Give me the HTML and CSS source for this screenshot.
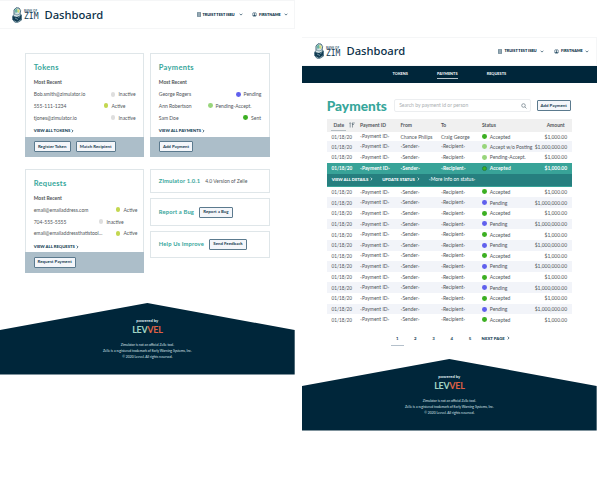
FILE: index.html
```html
<!DOCTYPE html>
<html lang="en">
<head>
<meta charset="utf-8">
<title>Dashboard</title>
<link rel="stylesheet" href="styles.css">
</head>
<body>
<svg width="0" height="0" class="defs">
  <symbol id="mark" viewBox="0 0 10 16">
    <path d="M2 3 4 .8 7 1 8.6 3.5 8 7 9.6 8v5L6 15.2H3L.8 13 .5 9.500 2 7.500z" fill="#d5e2e4" stroke="#365c70" stroke-width=".9"/>
    <path d="M1 9 5 10l4-2v4.500L5 15 1 13z" fill="#123c53"/>
    <path d="M2.500 3 5 1.500 6 5 3.500 6z" fill="#69b5a5"/><path d="M5.500 2 7.500 3 7 6 5.500 5z" fill="#d7dc72"/>
    <path d="M2 6.500 5 8l3-1M3 11l3 1.500M6 10.500 8 9.500" stroke="#7797a4" stroke-width=".9" fill="none"/>
  </symbol>
  <symbol id="building" viewBox="0 0 4 5"><path d="M.5.400h3v4.200h-3zM1.200 1.500h1.600M1.200 2.500h1.600M1.200 3.500h1.600" fill="none" stroke="#244b62" stroke-width=".6"/></symbol>
  <symbol id="user" viewBox="0 0 5 5"><circle cx="2.500" cy="2.500" r="2.100" fill="none" stroke="#244b62" stroke-width=".5"/><circle cx="2.500" cy="2" r=".8" fill="#244b62"/><path d="M1.200 4a1.300 1.200 0 0 1 2.600 0z" fill="#244b62"/></symbol>
  <symbol id="down" viewBox="0 0 4 3"><path d="M.6.700 2 2.100 3.400.7" fill="none" stroke="#244b62" stroke-width=".7"/></symbol>
  <symbol id="next" viewBox="0 0 3 4"><path d="M.7.600 2.100 2 .7 3.400" fill="none" stroke="currentColor" stroke-width=".7"/></symbol>
</svg>

<section class="screen home">
  <header class="top">
    <svg class="mark"><use href="#mark"/></svg>
    <div class="brand"><span>BANK OF</span><b>ZIM</b></div>
    <div class="heading">Dashboard</div>
    <div class="account bank"><svg class="building"><use href="#building"/></svg><span>TRUIST TEST ISBU</span><svg class="down"><use href="#down"/></svg></div>
    <div class="account person"><svg class="user"><use href="#user"/></svg><span>FIRSTNAME</span><svg class="down"><use href="#down"/></svg></div>
  </header>
  <main class="cards">
    <div class="column">
      <article class="panel">
        <div class="panel-body">
          <h2>Tokens</h2>
          <h3>Most Recent</h3>
          <p class="item"><span>Bob.smith@zimulator.io</span><em class="far"><i class="dot idle"></i>Inactive</em></p>
          <p class="item"><span>555-111-1234</span><em class="mid"><i class="dot active"></i>Active</em></p>
          <p class="item"><span>tjones@zimulator.io</span><em class="far"><i class="dot idle"></i>Inactive</em></p>
          <a class="all">VIEW ALL TOKENS <svg class="next"><use href="#next"/></svg></a>
        </div>
        <div class="actions"><button class="w37">Register Token</button><button class="w40">Match Recipient</button></div>
      </article>
      <article class="panel">
        <div class="panel-body">
          <h2>Requests</h2>
          <h3>Most Recent</h3>
          <p class="item"><span>email@emailaddress.com</span><em class="end"><i class="dot active"></i>Active</em></p>
          <p class="item"><span>704-555-5555</span><em class="near"><i class="dot idle"></i>Inactive</em></p>
          <p class="item"><span>email@emailaddressthatistool...</span><em class="end"><i class="dot active"></i>Active</em></p>
          <a class="all">VIEW ALL REQUESTS <svg class="next"><use href="#next"/></svg></a>
        </div>
        <div class="actions"><button class="w42">Request Payment</button></div>
      </article>
    </div>
    <div class="column">
      <article class="panel">
        <div class="panel-body">
          <h2>Payments</h2>
          <h3>Most Recent</h3>
          <p class="item"><span>George Rogers</span><em class="far"><i class="dot pending"></i>Pending</em></p>
          <p class="item"><span>Ann Robertson</span><em class="accept"><i class="dot light"></i>Pending-Accept.</em></p>
          <p class="item"><span>Sam Doe</span><em class="sent"><i class="dot ok"></i>Sent</em></p>
          <a class="all">VIEW ALL PAYMENTS <svg class="next"><use href="#next"/></svg></a>
        </div>
        <div class="actions"><button class="w35">Add Payment</button></div>
      </article>
      <div class="notes">
        <div class="note short"><h4>Zimulator 1.0.1</h4><span>4.0 Version of Zelle</span></div>
        <div class="note"><h4>Report a Bug</h4><button class="w34">Report a Bug</button></div>
        <div class="note"><h4>Help Us Improve</h4><button class="w38">Send Feedback</button></div>
      </div>
    </div>
  </main>
  <footer>
    <div class="powered">powered by</div>
    <div class="level"><span class="mint">LEV</span><span class="coral">VEL</span></div>
    <div class="legal"><p>Zimulator is not an official Zelle tool.</p><p>Zelle is a registered trademark of Early Warning Systems, Inc.</p><p>© 2020 Levvel. All rights reserved.</p></div>
  </footer>
</section>

<section class="screen payments">
  <header class="top">
    <svg class="mark"><use href="#mark"/></svg>
    <div class="brand"><span>BANK OF</span><b>ZIM</b></div>
    <div class="heading">Dashboard</div>
    <div class="account bank"><svg class="building"><use href="#building"/></svg><span>TRUIST TEST ISBU</span><svg class="down"><use href="#down"/></svg></div>
    <div class="account person"><svg class="user"><use href="#user"/></svg><span>FIRSTNAME</span><svg class="down"><use href="#down"/></svg></div>
  </header>
  <nav><a>TOKENS</a><a class="current">PAYMENTS</a><a>REQUESTS</a></nav>
  <main class="listing">
    <div class="tools">
      <h1>Payments</h1>
      <div class="search"><span>Search by payment id or person</span><svg viewBox="0 0 6 6"><circle cx="2.500" cy="2.500" r="1.800"/><path d="M3.900 3.900 5.500 5.500"/></svg></div>
      <button class="w34">Add Payment</button>
    </div>
    <div class="table" id="table">
      <div class="row head"><span class="sorted">Date<svg viewBox="0 0 6 6"><path d="M1.200 5.500V.8M.3 1.600 1.200.7l.9.9M3 1h2.800M3 2.500h2M3.500 1v4.500"/></svg></span><span>Payment ID</span><span>From</span><span>To</span><span>Status</span><span class="amount">Amount</span></div>
    </div>
    <div class="pager"><b class="on">1</b><b>2</b><b>3</b><b>4</b><b>5</b><a>NEXT PAGE <svg class="next"><use href="#next"/></svg></a></div>
  </main>
  <footer>
    <div class="powered">powered by</div>
    <div class="level"><span class="mint">LEV</span><span class="coral">VEL</span></div>
    <div class="legal"><p>Zimulator is not an official Zelle tool.</p><p>Zelle is a registered trademark of Early Warning Systems, Inc.</p><p>© 2020 Levvel. All rights reserved.</p></div>
  </footer>
</section>
<script src="table.js"></script>
</body>
</html>
```
FILE: styles.css
```css
* { box-sizing: border-box; }
body { margin: 0; width: 601px; height: 478px; overflow: hidden; background: #fff; display: flex; align-items: flex-start; font: 5px/1 Lato, "Open Sans", sans-serif; color: #50565a; white-space: nowrap; }
h1, h2, h3, h4, p { margin: 0; }
svg { display: block; flex: none; }
.defs { position: absolute; }
.screen { width: 294.7px; flex: none; display: flex; flex-direction: column; }
.home { height: 374.5px; }
.payments { margin: 36.5px 0 0 7.300px; height: 394px; }

.top { height: 29px; flex: none; display: flex; align-items: center; border: 1px solid #f5f6f7; border-left: 0; padding-left: 12px; color: #0b3048; }
.mark { width: 10px; height: 16px; }
.brand { width: 15px; margin-left: 2px; padding-top: 1px; display: flex; flex-direction: column; font-family: "Noto Sans", sans-serif; }
.brand span { font-size: 3px; font-weight: 600; line-height: 3px; color: #3d6074; }
.brand b { font: 400 8px/7px "DejaVu Sans Mono", monospace; color: #123c53; }
.heading { width: 152px; margin-left: 5.500px; font: 500 11.200px/16px "Noto Sans", sans-serif; }
.account { display: flex; align-items: center; font-size: 3.800px; font-weight: 800; }
.bank { width: 55.500px; }
.bank span { width: 33px; margin: 0 3px 0 2px; }
.person span { width: 22px; margin: 0 2.500px 0 2px; }
.building { width: 4px; height: 5px; }
.user { width: 5px; height: 5px; }
.down { width: 4px; height: 3px; }
.next { display: inline-block; width: 3px; height: 4px; margin-left: 1px; }

.cards { display: flex; gap: 5.800px; padding: 24.300px 0 0 25.200px; }
.column { width: 119.300px; display: flex; flex-direction: column; gap: 12px; }
.panel { height: 103.700px; border: 1px solid #dfe6e9; display: flex; flex-direction: column; }
.panel-body { padding: 8px 0 0 7.500px; height: 82.700px; }
h2 { font: 700 7.500px/12px Lato, sans-serif; color: #36a69b; letter-spacing: .3px; }
h3 { font-size: 5px; line-height: 6px; margin: 5px 0 3px; font-weight: 700; }
.item { display: flex; height: 11.700px; align-items: center; line-height: 6px; }
.item span { width: 70px; }
.item em { font-style: normal; display: flex; align-items: center; gap: 3px; }
.dot { width: 4.800px; height: 4.800px; border-radius: 50%; flex: none; }
.idle { background: #dedede; } .active { background: #c3d750; } .pending { background: #6060ed; } .light { background: #98d57b; } .ok { background: #3caf22; }
.far { margin-left: 7px; } .mid { margin-left: 0; } .end { margin-left: 12px; } .near { margin-left: -5px; } .accept { margin-left: -21px; } .sent { margin-left: 14.500px; }
.all { display: flex; align-items: center; font-size: 4.200px; font-weight: 900; color: #123c53; margin-top: 5px; line-height: 5px; }
.actions { margin: 0 -1px -1px; height: 20.500px; padding-left: 8.500px; background: #acbec9; display: flex; align-items: center; gap: 5px; }
button { height: 11px; padding: 0; border: 1px solid #5b7a8e; border-radius: 1px; background: #f4f6fa; color: #183d52; font: 700 4.400px/8px Lato, sans-serif; text-align: center; flex: none; }
.w34 { width: 34px; } .w35 { width: 34.500px; } .w37 { width: 37px; } .w38 { width: 38px; } .w40 { width: 40px; } .w42 { width: 42px; }
.notes { display: flex; flex-direction: column; gap: 5px; }
.note { height: 27.200px; border: 1px solid #dfe6e9; display: flex; align-items: center; padding-left: 7.500px; gap: 5px; }
.note.short { height: 24.500px; }
h4 { font-size: 5.800px; font-weight: 700; color: #36a69b; letter-spacing: .15px; }

footer { margin-top: auto; height: 71.500px; flex: none; background: #00263a; clip-path: polygon(0 27px, 50% 0, 100% 27px, 100% 100%, 0 100%); color: #dce7eb; text-align: center; }
.powered { padding-top: 15px; font-size: 4.200px; font-weight: 700; line-height: 5px; }
.level { font: 700 9px/9px Lato, sans-serif; padding-top: 2px; display: flex; justify-content: center; letter-spacing: -.3px; }
.mint { color: #a1d5c4; } .coral { color: #df6045; }
.legal { padding-top: 9.200px; font-size: 3.350px; line-height: 5.750px; }
.legal p { height: 5.750px; }

nav { height: 17.200px; background: #00263a; color: #eef3f5; display: flex; justify-content: center; gap: 29.200px; align-items: center; font-size: 3.850px; font-weight: 900; flex: none; }
nav a { height: 10px; padding-top: 3px; border-bottom: 1px solid transparent; }
nav .current { border-color: #b8c5cd; }
.listing { padding: 16.500px 0 0 24.700px; width: 270px; }
.tools { display: flex; align-items: center; height: 13px; }
h1 { width: 67.500px; font: 900 13.700px/14px Lato, sans-serif; color: #36a69b; }
.search { width: 136.500px; height: 12.700px; margin-right: 6px; border: 1px solid #eceef0; border-radius: 2px; padding: 0 2.500px 0 4px; display: flex; align-items: center; justify-content: space-between; font-size: 5px; color: #a9aeb1; }
.search svg { width: 6px; height: 6px; }
.search svg, .sorted svg { fill: none; stroke: #526570; stroke-width: .6; }
.table { margin-top: 7px; width: 245px; }
.row { display: grid; grid-template-columns: 28.500px 40.500px 40.500px 41px 43px 42.200px; padding-left: 4.800px; height: 10.670px; align-items: center; line-height: 6px; }
.shaded { background: #f2f4f9; }
.first { height: 9.700px; }
.date { font-size: 4.700px; }
.tag { font-size: 3.300px; vertical-align: .3px; }
.status { display: flex; align-items: center; gap: 3px; }
.amount { text-align: right; }
.row.head { height: 12.500px; background: #f0f0f0; font-weight: 700; }
.head .sorted { display: flex; gap: 5px; height: 12px; align-items: center; padding-left: 2px; background: linear-gradient(#b5bdc2, #b5bdc2) 0 100% / 15px 1px no-repeat; }
.sorted svg { width: 6px; height: 6px; }
.head .amount { padding-right: 2.500px; }
.row.selected { background: #38a398; color: #fff; font-weight: 700; height: 11.200px; }
.selected .dot { border: .5px solid #268447; }
.detail { height: 12.700px; padding-left: 5px; background: #267f7f; border-bottom: 1px solid #38a398; color: #fff; display: flex; align-items: center; gap: 9px; font-size: 5px; }
.detail b { font-size: 4.200px; font-weight: 900; }
.pager { display: flex; align-items: center; height: 14px; margin: 7px 0 0 64px; font-size: 4.400px; color: #123c53; }
.pager b { width: 13px; margin-right: 5.200px; text-align: center; height: 14px; line-height: 13px; border-bottom: 1.500px solid transparent; }
.pager .on { border-color: #b4c0cb; }
.pager a { font-weight: 900; font-size: 4.300px; height: 14px; line-height: 13px; }
```
FILE: table.js
```js
const table = document.getElementById('table');
const small = '$1,000.00';
const large = '$1,000,000.00';
const tag = (text) => text.replace(/[<>]/g, (c) => `<span class="tag">${c === '<' ? '&lt;' : '&gt;'}</span>`);
const rows = [
  ['Accepted', 'ok', small, 'Chance Philips', 'Craig George'],
  ['Accept w/o Posting', 'light', large],
  ['Pending-Accept.', 'light', small],
  ['Accepted', 'ok', small]
];
for (let i = 0; i < 13; i++) {
  rows.push(i % 2 ? ['Pending', 'pending', large] : ['Accepted', 'ok', small]);
}
rows.forEach(([status, dot, amount, from = '<Sender>', to = '<Recipient>'], i) => {
  const row = document.createElement('div');
  row.className = 'row ' + (i === 0 ? 'first' : i === 3 ? 'selected' : i % 2 ? 'shaded' : 'plain');
  row.innerHTML =
    `<span class="date">01/18/20</span><span>${tag('<Payment ID>')}</span><span>${tag(from)}</span><span>${tag(to)}</span>` +
    `<span class="status"><i class="dot ${dot}"></i>${status}</span><span class="amount">${amount}</span>`;
  table.append(row);
  if (i === 3) {
    const detail = document.createElement('div');
    detail.className = 'detail';
    detail.innerHTML = '<b>VIEW ALL DETAILS <svg class="next"><use href="#next"/></svg></b><b>UPDATE STATUS <svg class="next"><use href="#next"/></svg></b><span>' + tag('<More info on status>') + '</span>';
    table.append(detail);
  }
});
```
